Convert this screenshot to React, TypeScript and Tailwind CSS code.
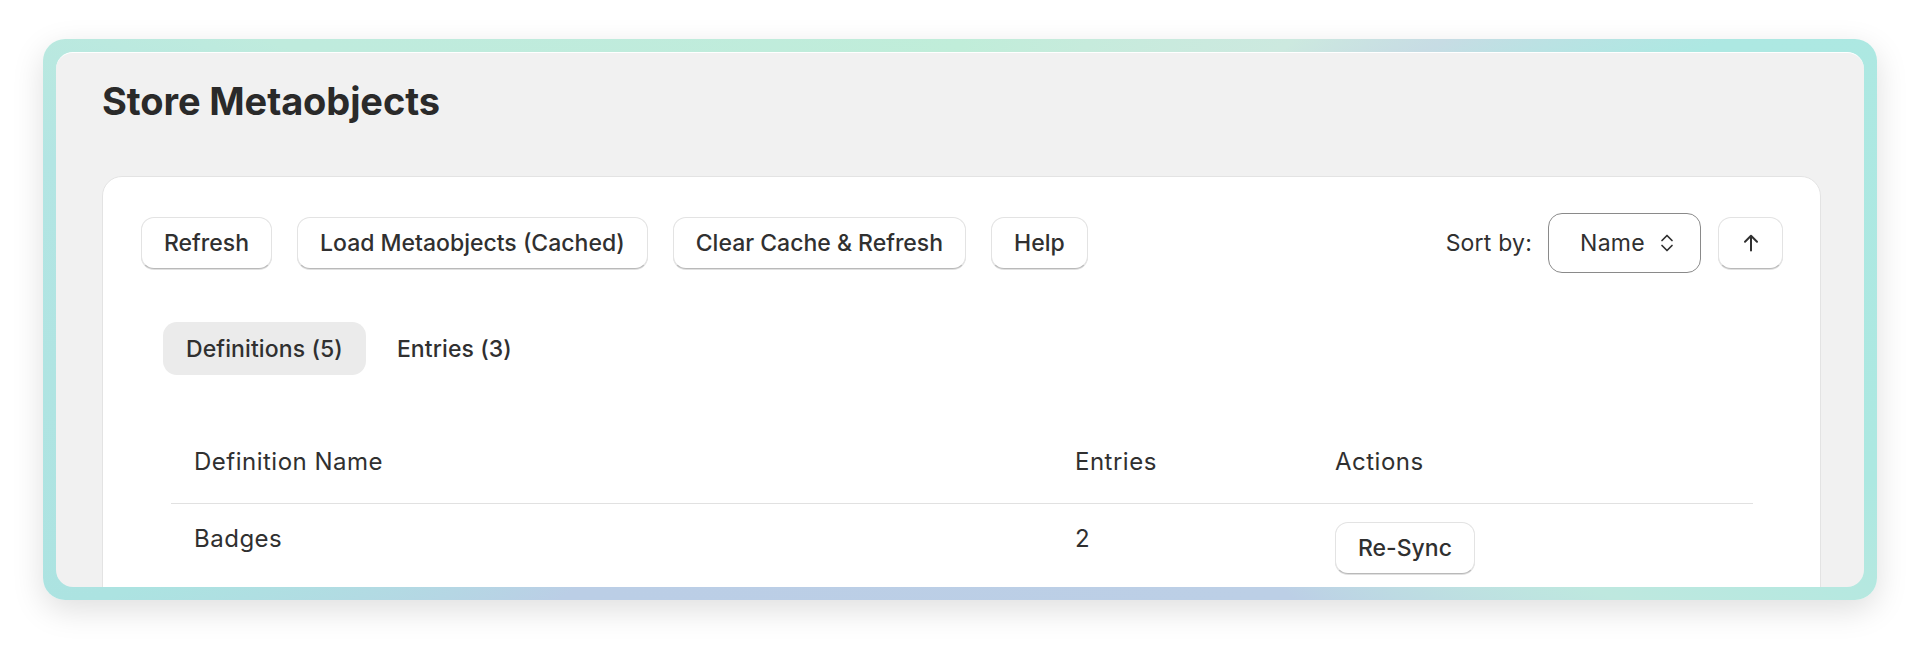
import React from "react";

function Btn({ children, className = "" }: { children: React.ReactNode; className?: string }) {
  return (
    <button
      className={
        "h-[52px] px-[22px] rounded-[13px] bg-white border border-[#e3e3e3] border-b-[#b9b9b9] shadow-[0_1px_0_rgba(0,0,0,0.12)] text-[23px] leading-[30px] font-[550] text-[#303030] whitespace-nowrap " +
        className
      }
    >
      {children}
    </button>
  );
}

export default function App() {
  return (
    <div className="w-[1920px] min-h-[647px] bg-white pt-[39px] pl-[43px] pr-[43px] font-['Inter','Noto_Sans',sans-serif] text-[#303030]">
      <div className="h-[561px] rounded-[22px] p-[13px] bg-[conic-gradient(from_0deg_at_50%_50%,#c0edd9_0deg,#cce9df_50deg,#c7dce4_60deg,#ade8e2_70deg,#ace8e1_100deg,#bee8df_113deg,#bccfe6_130deg,#bbcee6_235deg,#ace3e1_252deg,#b3e5e3_280deg,#bfebdd_292deg,#c0edd9_360deg)] shadow-[0_10px_32px_rgba(0,0,0,0.13)]">
        <div className="h-full rounded-[17px] bg-[#f1f1f1] overflow-hidden border-t border-white pl-[46px] pr-[43px]">
          <h1 className="pt-[25px] text-[38px] leading-[46px] font-bold tracking-[-0.1px] text-[#2a2a2a]">
            Store Metaobjects
          </h1>
          <div className="mt-[52px] rounded-[20px] border border-[#e3e3e3] bg-white pt-[40px] pl-[38px] pr-[37px] pb-[60px]">
            <div className="flex items-center justify-between h-[52px]">
              <div className="flex gap-[25px]">
                <Btn>Refresh</Btn>
                <Btn>Load Metaobjects (Cached)</Btn>
                <Btn>Clear Cache &amp; Refresh</Btn>
                <Btn>Help</Btn>
              </div>
              <div className="flex items-center">
                <span className="text-[23px] leading-[30px] tracking-[0.2px]">Sort by:</span>
                <div className="ml-[16px] h-[60px] w-[153px] rounded-[14px] border border-[#8a8a8a] flex items-center pl-[31px] pr-[24px] justify-between">
                  <span className="text-[23px] leading-[30px] tracking-[0.3px]">Name</span>
                  <svg width="18" height="24" viewBox="0 0 18 24" fill="none">
                    <path
                      d="M4 9.5 L9 4.5 L14 9.5 M4 14.5 L9 19.5 L14 14.5"
                      stroke="#303030"
                      strokeWidth="1.7"
                      strokeLinecap="round"
                      strokeLinejoin="round"
                    />
                  </svg>
                </div>
                <button className="ml-[17px] h-[52px] w-[65px] rounded-[13px] bg-white border border-[#e3e3e3] border-b-[#b9b9b9] shadow-[0_1px_0_rgba(0,0,0,0.12)] flex items-center justify-center">
                  <svg width="16" height="18" viewBox="0 0 16 18" fill="none">
                    <path
                      d="M8 16.5 V1.8 M2 7.8 L8 1.8 L14 7.8"
                      stroke="#303030"
                      strokeWidth="2"
                      strokeLinecap="round"
                      strokeLinejoin="round"
                    />
                  </svg>
                </button>
              </div>
            </div>

            <div className="mt-[53px] ml-[22px] flex gap-[8px]">
              <button className="h-[53px] px-[23px] rounded-[14px] bg-[#ebebeb] text-[23px] leading-[30px] font-medium tracking-[0.1px] text-[#303030]">
                Definitions (5)
              </button>
              <button className="h-[53px] px-[23px] rounded-[14px] text-[23px] leading-[30px] font-medium tracking-[0.1px] text-[#303030]">
                Entries (3)
              </button>
            </div>

            <table className="mt-[48px] ml-[30px] w-[1582px] border-collapse text-[24px] leading-[33px] tracking-[0.5px] text-[#303030]">
              <thead>
                <tr className="border-b border-[#e1e1e1]">
                  <th className="w-[881px] pl-[23px] pt-[22px] pb-[25px] text-left font-normal align-top">Definition Name</th>
                  <th className="w-[260px] pl-[23px] pt-[22px] pb-[25px] text-left font-normal align-top">Entries</th>
                  <th className="pl-[23px] pt-[22px] pb-[25px] text-left font-normal align-top">Actions</th>
                </tr>
              </thead>
              <tbody>
                <tr>
                  <td className="pl-[23px] pt-[18px] align-top">Badges</td>
                  <td className="pl-[23px] pt-[18px] align-top">2</td>
                  <td className="pl-[23px] pt-[18px] align-top">
                    <Btn className="h-[51px] px-[22px] tracking-normal">Re-Sync</Btn>
                  </td>
                </tr>
              </tbody>
            </table>
          </div>
        </div>
      </div>
    </div>
  );
}
